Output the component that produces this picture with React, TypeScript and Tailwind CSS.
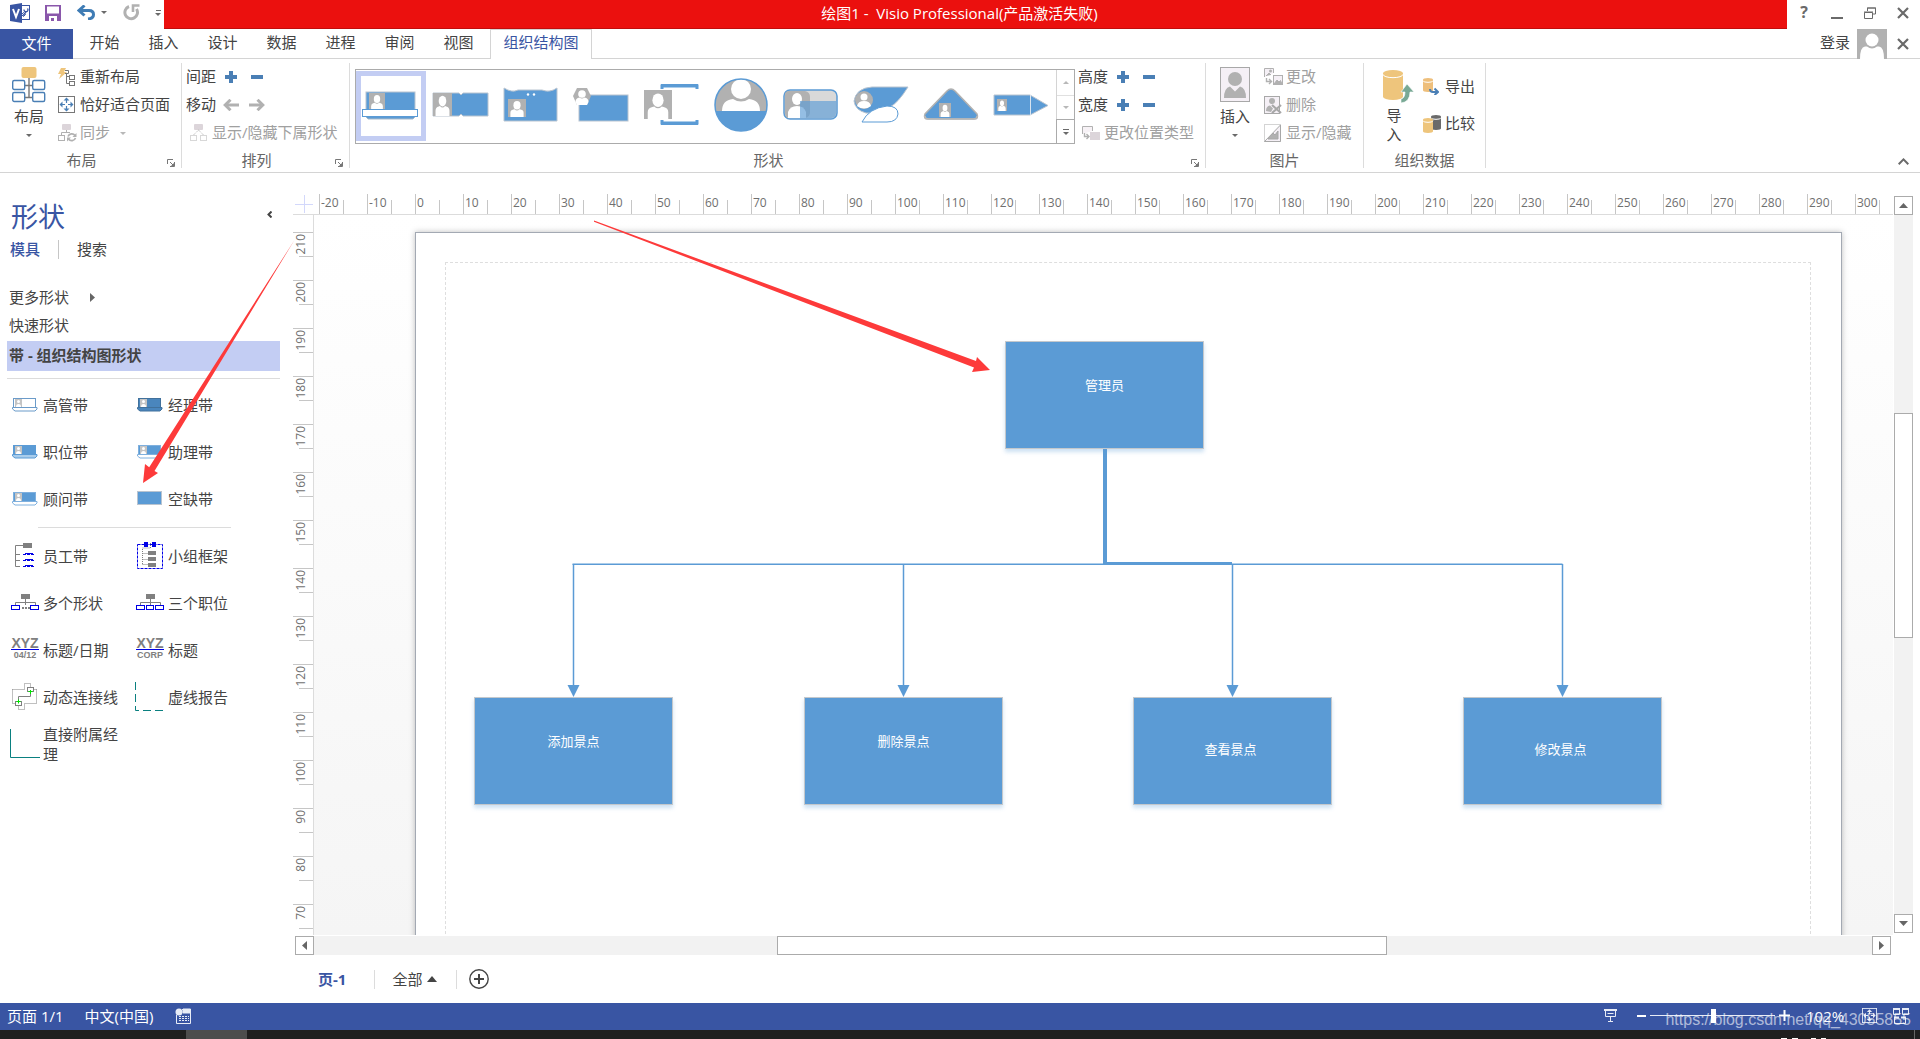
import React from "react";

const FONT = "font-['Open_Sans','Noto_Sans_CJK_SC',sans-serif]";

type Kids = { children?: React.ReactNode };

/* ---------- small glyphs ---------- */

function Plus() {
  return (
    <svg width="12" height="12" viewBox="0 0 12 12" fill="#4a7fb5">
      <path d="M4 0h4v4h4v4H8v4H4V8H0V4h4z" />
    </svg>
  );
}

function Minus() {
  return (
    <svg width="12" height="12" viewBox="0 0 12 12" fill="#4a7fb5">
      <path d="M0 4h12v4H0z" />
    </svg>
  );
}

function ArrowGlyph({ flip }: { flip?: boolean }) {
  return (
    <svg width="16" height="12" viewBox="0 0 16 12" fill="none" stroke="#b1b1b1" strokeWidth="3" className={flip ? "rotate-180" : ""}>
      <path d="M16 6H2" />
      <path d="M7.500 0.800L2.200 6l5.300 5.200" />
    </svg>
  );
}

function Caret({ color = "#6a6a6a" }: { color?: string }) {
  return (
    <svg width="6" height="3" viewBox="0 0 6 3" fill={color}>
      <path d="M0 0h6L3 3z" />
    </svg>
  );
}

function CloseGlyph() {
  return (
    <svg width="12" height="12" viewBox="0 0 12 12" stroke="#6a6a6a" strokeWidth="2.200">
      <path d="M1 1l10 10M11 1L1 11" />
    </svg>
  );
}

function Launcher() {
  return (
    <svg width="8" height="8" viewBox="0 0 8 8" fill="none" stroke="#777" strokeWidth="1">
      <path d="M0.500 5V0.500H6M3 3l3 3M7.500 3v4.500H3" />
      <path d="M7 4v3H4z" fill="#777" stroke="none" />
    </svg>
  );
}

function Person({ x, y, w, h, bg = "#b1b1b1" }: { x: number; y: number; w: number; h: number; bg?: string }) {
  return (
    <svg x={x} y={y} width={w} height={h} viewBox="0 0 30 30" preserveAspectRatio="none">
      <rect width="30" height="30" fill={bg} />
      <ellipse cx="15" cy="10.500" rx="6" ry="7" fill="#fff" />
      <path d="M4 30v-7q0-4.500 5-5.500l2-.5q4 4 8 0l2 .5q5 1 5 5.500v7z" fill="#fff" />
    </svg>
  );
}

/* ---------- quick access bar ---------- */

function VisioLogo() {
  return (
    <svg width="20" height="20" viewBox="0 0 20 20">
      <rect x="9.500" y="2.500" width="10" height="14" fill="#fff" stroke="#3955a3" />
      <path d="M13 12.500l3-3.500v-1M14 6.500a2 2 0 1 0 3.500-1" fill="none" stroke="#3955a3" strokeWidth="1.300" />
      <path d="M11.500 11.500l2-2 2 2-2 2z" fill="none" stroke="#3955a3" />
      <path d="M0 2l12-2v20L0 18z" fill="#3955a3" />
      <path d="M3 6l3 8 3-8" fill="none" stroke="#fff" strokeWidth="2" />
    </svg>
  );
}

function SaveIcon() {
  return (
    <svg width="16" height="16" viewBox="0 0 16 16">
      <path d="M0 0h16v16H0z" fill="#8a57ab" />
      <path d="M2 1.500h12v7H2zM4 11h8v5H9v-3H6v3H4z" fill="#fff" />
    </svg>
  );
}

function UndoIcon() {
  return (
    <svg width="18" height="15" viewBox="0 0 18 15" fill="none" stroke="#3f7cb5" strokeWidth="3">
      <path d="M7.500 0.500L2 5.500l5.500 5" />
      <path d="M2.500 5.500h9.500q4.500 0 4.500 4t-5.500 4.500" />
    </svg>
  );
}

function RedoIcon() {
  return (
    <svg width="17" height="17" viewBox="0 0 17 17" fill="none" stroke="#b1b1b1" strokeWidth="3">
      <path d="M13.500 5A6.300 6.300 0 1 1 6 2.500" />
      <path d="M10 8V1.500H16.500" strokeWidth="2.600" />
    </svg>
  );
}

function TitleBar() {
  return (
    <header className="flex h-[29px] shrink-0">
      <div className="flex w-[164px] shrink-0 items-center pb-1 pl-[10px]">
        <button aria-label="Visio"><VisioLogo /></button>
        <button aria-label="保存" className="ml-[15px]"><SaveIcon /></button>
        <button aria-label="撤消" className="ml-4 flex items-center gap-[6px]"><UndoIcon /><Caret /></button>
        <button aria-label="恢复" className="ml-4"><RedoIcon /></button>
        <button aria-label="自定义快速访问工具栏" className="ml-[15px] flex flex-col items-center gap-[2px]">
          <span className="h-px w-[5px] bg-[#6a6a6a]" />
          <Caret />
        </button>
      </div>
      <div className="flex flex-1 items-center justify-center border-b border-[#c00d0d] bg-[#eb100e] pb-[3px] pr-8">
        <h1 className="whitespace-pre text-[15px] leading-5 text-white">绘图1 -  Visio Professional(产品激活失败)</h1>
      </div>
      <div className="flex w-[133px] shrink-0 items-center justify-between pb-[3px] pl-[11px] pr-[11px]">
        <button aria-label="帮助" className="w-3 pb-[2px] text-[16px] font-bold leading-5 text-[#6a6a6a]">?</button>
        <button aria-label="最小化" className="flex h-3 items-end"><span className="h-[2px] w-3 bg-[#6a6a6a]" /></button>
        <button aria-label="还原">
          <svg width="12" height="12" viewBox="0 0 12 12" fill="none" stroke="#6a6a6a">
            <path d="M3.500 4V1h8v6H9M3 1h9M0.500 5.500h8v6h-8zM0 5h9" />
          </svg>
        </button>
        <button aria-label="关闭"><CloseGlyph /></button>
      </div>
    </header>
  );
}

const TABS = ["开始", "插入", "设计", "数据", "进程", "审阅", "视图"];

function TabRow() {
  return (
    <nav className="flex h-[30px] shrink-0 text-[15px] leading-[22px] text-[#444]">
      <button className="w-[73px] bg-[#3955a3] pb-[2px] text-white">文件</button>
      <div className="flex flex-1 border-b border-[#d4d4d4] pl-[2px]">
        {TABS.map((t) => (
          <button key={t} className="w-[59px] pb-[3px]">{t}</button>
        ))}
        <button className="-mb-px ml-[2px] w-[102px] border-x border-t border-[#d4d4d4] bg-white pb-[5px] text-[#3955a3]">组织结构图</button>
      </div>
      <div className="flex items-center border-b border-[#d4d4d4] pr-[11px]">
        <button className="pb-[3px] pr-[7px]">登录</button>
        <svg width="30" height="30" viewBox="0 0 30 30" className="-mb-px mr-[10px]">
          <rect width="30" height="30" fill="#b1b1b1" />
          <circle cx="15" cy="11" r="6.500" fill="#fff" />
          <path d="M3 30q0-12 5-12.500h2q5 4 10 0h2q5 .5 5 12.500z" fill="#fff" />
        </svg>
        <button aria-label="关闭窗口"><CloseGlyph /></button>
      </div>
    </nav>
  );
}

/* ---------- ribbon icons ---------- */

function LayoutIcon() {
  return (
    <svg width="34" height="36" viewBox="0 0 34 36" fill="none" stroke="#4a7fb5" strokeWidth="1.400">
      <path d="M17 11v20M12.500 18.500h9M12.500 30.500h9" stroke="#777" />
      <rect x="9.500" y="0" width="15" height="11" rx="2" fill="#eec57c" stroke="none" />
      {[13.5, 25.5].map((y) => (
        <g key={y}>
          <rect x="0.700" y={y} width="12" height="9" rx="1.500" fill="#fff" />
          <rect x="20.700" y={y} width="12" height="9" rx="1.500" fill="#fff" />
        </g>
      ))}
    </svg>
  );
}

function RelayoutIcon() {
  return (
    <svg width="18" height="18" viewBox="0 0 18 18" fill="none" stroke="#777">
      <path d="M3 0h5L6 4h3L1 11l2-5H0z" fill="#eec57c" stroke="none" />
      <path d="M7 2.500h3.500v3H7M8.500 6v9.500H12M8.500 8.500H12" />
      <rect x="11.500" y="7.500" width="5" height="4" />
      <rect x="11.500" y="13.500" width="5" height="4" />
    </svg>
  );
}

function FitIcon({ color = "#4a7fb5", frame = "#777", size = 17 }: { color?: string; frame?: string; size?: number }) {
  return (
    <svg width={size} height={size} viewBox="0 0 17 17">
      <rect x="0.500" y="0.500" width="16" height="16" fill="none" stroke={frame} />
      <path d="M8.500 1.500l3 3h-6zM8.500 15.500l3-3h-6zM1.500 8.500l3-3v6zM15.500 8.500l-3-3v6z" fill={color} />
      <path d="M8.500 4v3M8.500 10v3M4 8.500h3M10 8.500h3" stroke={color} strokeWidth="1.200" />
    </svg>
  );
}

function SyncIcon() {
  return (
    <svg width="19" height="18" viewBox="0 0 19 18" fill="none" stroke="#b1b1b1">
      <path d="M8.500 6v3M3.500 11.500V8.500H12" />
      <rect x="4" y="0" width="9" height="6" rx="1" fill="#dcd5da" stroke="none" />
      <rect x="0.500" y="11.500" width="6" height="5" />
      <path d="M10 12.500a4 4 0 0 1 7-1M17.500 14a4 4 0 0 1-7 1" strokeWidth="1.700" />
      <path d="M18.500 9v4h-4zM9 17.500v-4h4z" fill="#b1b1b1" stroke="none" />
    </svg>
  );
}

function SubordinateIcon() {
  return (
    <svg width="18" height="17" viewBox="0 0 18 17" fill="none" stroke="#b1b1b1">
      <rect x="4" y="0" width="9" height="6" rx="1" fill="#dcd5da" stroke="none" />
      <path d="M8.500 6L3.500 11M8.500 6l5 5" strokeDasharray="1 1" />
      <rect x="0.500" y="11.500" width="6" height="5" strokeDasharray="1 1" />
      <rect x="10.500" y="11.500" width="6" height="5" strokeDasharray="1 1" />
    </svg>
  );
}

function PositionTypeIcon() {
  return (
    <svg width="18" height="14" viewBox="0 0 18 14" fill="none" stroke="#b1b1b1">
      <path d="M0.500 8V0.500h10V5" fill="#f7f2f6" />
      <rect x="8" y="6" width="10" height="8" fill="#dcd5da" stroke="none" />
      <path d="M2.500 7v3.500H7M4.500 8L7 10.500 4.500 13" strokeWidth="1.400" />
    </svg>
  );
}

function PortraitIcon() {
  return (
    <svg width="30" height="35" viewBox="0 0 30 35">
      <rect x="0.500" y="0.500" width="29" height="34" fill="#f5f0f6" stroke="#a8a8a8" />
      <circle cx="15" cy="12" r="7" fill="#b1b1b1" />
      <path d="M4 31q0-10 6-11.500l5 5 5-5q6 1.500 6 11.500z" fill="#b1b1b1" />
    </svg>
  );
}

function ChangePicIcon() {
  return (
    <svg width="19" height="18" viewBox="0 0 19 18" fill="none" stroke="#b1b1b1">
      <path d="M0.500 9V0.500h9V5" fill="#f5f0f6" />
      <circle cx="6.500" cy="3" r="1.500" fill="#b1b1b1" stroke="none" />
      <path d="M2 8l3-3 2 2" fill="#b1b1b1" />
      <rect x="9.500" y="7.500" width="9" height="9" fill="#f5f0f6" />
      <path d="M10 16l3-4 2 2 1.500-1.500L18 16z" fill="#b1b1b1" />
      <path d="M2.500 10v3.500H7M5 11l2.500 2.500L5 16" strokeWidth="1.400" />
    </svg>
  );
}

function DeletePicIcon() {
  return (
    <svg width="18" height="18" viewBox="0 0 18 18" fill="none" stroke="#a8a8a8">
      <rect x="0.500" y="0.500" width="15" height="17" fill="#f5f0f6" />
      <circle cx="8" cy="5" r="3" fill="#b1b1b1" stroke="none" />
      <path d="M2 15q0-5 4-5.500l3 3-2 3.500z" fill="#b1b1b1" stroke="none" />
      <path d="M8 9l9 8M17 9l-9 8" strokeWidth="2.200" />
    </svg>
  );
}

function ShowPicIcon() {
  return (
    <svg width="17" height="18" viewBox="0 0 17 18" fill="none" stroke="#a8a8a8">
      <rect x="0.500" y="0.500" width="16" height="17" strokeDasharray="1 1" />
      <path d="M16.500 1v16.500H0.500z" fill="#f5f0f6" />
      <path d="M4 15l5-6 2 2 3-4v8z" fill="#b1b1b1" />
    </svg>
  );
}

function Cylinder({ x, y, w, h, fill }: { x: number; y: number; w: number; h: number; fill: string }) {
  const r = w / 2;
  const e = w / 6;
  return (
    <g>
      <path d={`M${x} ${y + e}v${h - 2 * e}a${r} ${e} 0 0 0 ${w} 0v${-(h - 2 * e)}a${r} ${e} 0 0 0 ${-w} 0z`} fill={fill} />
      <path d={`M${x} ${y + e + 1}a${r} ${e} 0 0 0 ${w} 0`} fill="none" stroke="#fff" strokeWidth="1" />
    </g>
  );
}

function ImportIcon() {
  return (
    <svg width="31" height="33" viewBox="0 0 31 33">
      <Cylinder x={0} y={0} w={20} h={30} fill="#eec57c" />
      <path d="M24 14l7 8h-4q0 10-9 11v-4q4-1 4-7h-4z" fill="#78a995" stroke="#fff" strokeWidth="0.600" />
    </svg>
  );
}

function ExportIcon() {
  return (
    <svg width="16" height="17" viewBox="0 0 16 17">
      <Cylinder x={0} y={0} w={10} h={14} fill="#eebf7c" />
      <path d="M7 11q0 3 3 3h4M11.500 10.500l3.500 3.500-3.500 3" fill="none" stroke="#4a7fb5" strokeWidth="2" />
    </svg>
  );
}

function CompareIcon() {
  return (
    <svg width="19" height="18" viewBox="0 0 19 18">
      <Cylinder x={8} y={0} w={10} h={15} fill="#6a6a6a" />
      <Cylinder x={0} y={3} w={10} h={15} fill="#eec57c" />
    </svg>
  );
}

/* ---------- ribbon ---------- */

function Group({ label, width, launcher, children }: Kids & { label: string; width: string; launcher?: boolean }) {
  return (
    <section className={`${width} relative flex shrink-0 flex-col border-r border-[#dcdcdc]`}>
      <div className="flex h-[89px]">{children}</div>
      <h2 className="text-center text-[15px] leading-4 text-[#666]">
        <span className={launcher ? "pr-[18px]" : ""}>{label}</span>
      </h2>
      {launcher && (
        <button aria-label={`${label}设置`} className="absolute bottom-[1px] right-[6px]"><Launcher /></button>
      )}
    </section>
  );
}

function Cmd({ icon, label, disabled, caret }: { icon: React.ReactNode; label: string; disabled?: boolean; caret?: boolean }) {
  return (
    <button className={`flex h-7 items-center whitespace-nowrap text-[15px] leading-5 ${disabled ? "text-[#a0a0a0]" : "text-[#444]"}`}>
      <span className="flex w-[22px] pb-px">{icon}</span>
      <span className="pb-[2px]">{label}</span>
      {caret && <span className="ml-[10px]"><Caret color="#b8b8b8" /></span>}
    </button>
  );
}

function Stepper({ label, less, more }: { label: string; less: React.ReactNode; more: React.ReactNode }) {
  return (
    <div className="flex h-7 items-center text-[15px] leading-5 text-[#444]">
      <span className="pb-[2px]">{label}</span>
      <button aria-label={`${label} 1`} className="ml-[7px] flex w-4 justify-center pb-px">{less}</button>
      <button aria-label={`${label} 2`} className="ml-[10px] flex w-4 justify-center pb-px">{more}</button>
    </div>
  );
}

const BLUE = "#5b9bd5";

const GALLERY: { name: string; art: React.ReactNode }[] = [
  {
    name: "带",
    art: (
      <>
        <rect x="6" y="21" width="49" height="24" fill={BLUE} stroke="#b9c4d0" />
        <Person x={9} y={22} w={16} h={17} />
        <path d="M5 45h51l-3 3H8z" fill={BLUE} stroke="#a9b9c9" />
        <rect x="2.500" y="38.500" width="55" height="7" fill="#fff" stroke={BLUE} />
      </>
    ),
  },
  {
    name: "凹槽",
    art: (
      <>
        <path d="M3 22h26l2 2 2-2h25v23H33l-2-2-2 2H3z" fill={BLUE} stroke="#b9c4d0" />
        <Person x={3} y={22} w={19} h={23} />
      </>
    ),
  },
  {
    name: "别针",
    art: (
      <>
        <path d="M4 17q8 5 14 2h24q8 3 15-2v33H4z" fill={BLUE} stroke="#b9c4d0" />
        <circle cx="28" cy="23.500" r="1.200" fill="#fff" />
        <circle cx="34" cy="23.500" r="1.200" fill="#fff" />
        <Person x={8} y={28} w={18} h={18} />
      </>
    ),
  },
  {
    name: "石头",
    art: (
      <>
        <rect x="9" y="24" width="49" height="26" fill={BLUE} stroke="#b9c4d0" />
        <path d="M7 17h10l4 8-4 9H7l-4-9z" fill="#b1b1b1" />
        <circle cx="12" cy="23" r="3.800" fill="#fff" />
        <path d="M5.500 31q0-4 4-4.500 2.500 2 5 0 4 .5 4 4.500L17 34H7z" fill="#fff" />
      </>
    ),
  },
  {
    name: "边界",
    art: (
      <>
        <path d="M22 18V15h35v3M22 49v3h35v-3" fill="none" stroke={BLUE} strokeWidth="3" />
        <path d="M21 14h37M21 53h37" stroke={BLUE} strokeWidth="2" />
        <Person x={4} y={19} w={28} h={29} />
      </>
    ),
  },
  {
    name: "泡沫",
    art: (
      <>
        <clipPath id="bubble"><circle cx="31" cy="34" r="26" /></clipPath>
        <circle cx="31" cy="34" r="26" fill={BLUE} />
        <g clipPath="url(#bubble)">
          <rect x="4" y="7" width="54" height="33" fill="#b1b1b1" />
          <circle cx="31" cy="18" r="10" fill="#fff" />
          <path d="M12 40q0-11 11-12 8 5 16 0 11 1 11 12z" fill="#fff" />
        </g>
        <circle cx="31" cy="34" r="26" fill="none" stroke={BLUE} strokeWidth="1.500" />
      </>
    ),
  },
  {
    name: "平底凹圆",
    art: (
      <>
        <rect x="4" y="19" width="53" height="29" rx="6" fill="#d9d9d9" stroke={BLUE} strokeWidth="1.500" />
        <path d="M9 20h16q5 1 5 6v15q0 5-5 6H9q-4 0-4-5V24q0-4 4-4z" fill="#b1b1b1" />
        <ellipse cx="17" cy="28" rx="5" ry="6" fill="#fff" />
        <path d="M8 47v-6q2-6 9-6t9 6v6z" fill="#fff" />
        <path d="M20 30h36v12q0 5-5 5H20z" fill="#5b9bd5" fillOpacity="0.650" />
      </>
    ),
  },
  {
    name: "花瓣",
    art: (
      <>
        <path d="M58 16q-10 16-18 20-10 7-24 6-11-3-12-12 2-13 18-14z" fill={BLUE} stroke="#b9c4d0" />
        <circle cx="14" cy="29" r="9" fill="#b1b1b1" />
        <circle cx="14" cy="26" r="3.500" fill="#fff" />
        <path d="M7 35q1-5 7-5t7 5q-7 5-14 0z" fill="#fff" />
        <path d="M12 51q7-14 25-16 11 0 11 8-1 8-11 8z" fill="#fff" stroke={BLUE} />
      </>
    ),
  },
  {
    name: "三角形",
    art: (
      <>
        <path d="M31 18q2 0 4 2l22 23q2 5-3 5H8q-5 0-3-5l22-23q2-2 4-2z" fill={BLUE} stroke="#b1b1b1" strokeWidth="1.500" />
        <path d="M5 45q0 3 4 3h44q4 0 4-3" fill="none" stroke="#b9b9b9" strokeWidth="1.500" />
        <Person x={19} y={32} w={12} h={14} />
      </>
    ),
  },
  {
    name: "箭头",
    art: (
      <>
        <path d="M4 24h36l18 10.500L40 44H4z" fill={BLUE} stroke="#b9c4d0" />
        <path d="M40.500 24v20" stroke="#d8e4ef" />
        <Person x={7} y={28} w={10} h={12} />
      </>
    ),
  },
];

function Gallery() {
  return (
    <div className="ml-[5px] mt-[6px] flex h-[75px] w-[720px] border border-[#ababab]">
      <div className="flex flex-1 pt-px">
        {GALLERY.map((g, i) => (
          <button
            key={g.name}
            aria-label={g.name}
            className={`flex h-[70px] w-[70px] items-center justify-center ${i === 0 ? "border-[5px] border-[#c3cdf3]" : ""}`}
          >
            <svg width="60" height="70" viewBox="1 0 60 70" className="shrink-0">{g.art}</svg>
          </button>
        ))}
      </div>
      <div className="flex w-[18px] flex-col border-l border-[#d4d4d4]">
        <button aria-label="上一行" className="flex h-[26px] items-center justify-center border-b border-[#e0e0e0]">
          <span className="rotate-180"><Caret color="#b8b8b8" /></span>
        </button>
        <button aria-label="下一行" className="flex h-[23px] items-center justify-center"><Caret color="#b8b8b8" /></button>
        <button aria-label="更多" className="-ml-px flex flex-1 flex-col items-center justify-center gap-[2px] border-l border-t border-[#ababab]">
          <span className="h-px w-[6px] bg-[#6a6a6a]" />
          <Caret />
        </button>
      </div>
    </div>
  );
}

function Ribbon() {
  return (
    <div className="relative flex h-[114px] shrink-0 border-b border-[#d4d4d4] py-1">
      <Group label="布局" width="w-[182px]" launcher>
        <button className="ml-2 mr-2 flex w-[42px] flex-col items-center pt-1 text-[15px] leading-5 text-[#444]">
          <LayoutIcon />
          <span className="mb-2 mt-[3px]">布局</span>
          <Caret />
        </button>
        <div className="flex flex-col">
          <Cmd icon={<RelayoutIcon />} label="重新布局" />
          <Cmd icon={<FitIcon />} label="恰好适合页面" />
          <Cmd icon={<SyncIcon />} label="同步" disabled caret />
        </div>
      </Group>
      <Group label="排列" width="w-[168px]" launcher>
        <div className="ml-1 flex flex-col">
          <Stepper label="间距" less={<Plus />} more={<Minus />} />
          <Stepper label="移动" less={<ArrowGlyph />} more={<ArrowGlyph flip />} />
          <div className="ml-1"><Cmd icon={<SubordinateIcon />} label="显示/隐藏下属形状" disabled /></div>
        </div>
      </Group>
      <Group label="形状" width="w-[856px]" launcher>
        <Gallery />
        <div className="ml-[3px] flex flex-col">
          <Stepper label="高度" less={<Plus />} more={<Minus />} />
          <Stepper label="宽度" less={<Plus />} more={<Minus />} />
          <div className="ml-1"><Cmd icon={<PositionTypeIcon />} label="更改位置类型" disabled /></div>
        </div>
      </Group>
      <Group label="图片" width="w-[158px]">
        <button className="ml-2 mr-2 flex w-[42px] flex-col items-center pt-1 text-[15px] leading-5 text-[#444]">
          <PortraitIcon />
          <span className="mb-2 mt-[4px]">插入</span>
          <Caret />
        </button>
        <div className="flex flex-col">
          <Cmd icon={<ChangePicIcon />} label="更改" disabled />
          <Cmd icon={<DeletePicIcon />} label="删除" disabled />
          <Cmd icon={<ShowPicIcon />} label="显示/隐藏" disabled />
        </div>
      </Group>
      <Group label="组织数据" width="w-[122px]">
        <button className="ml-4 flex w-[36px] flex-col items-center pt-[7px] text-[15px] leading-[19px] text-[#444]">
          <ImportIcon />
          <span className="mr-[8px] mt-[3px] w-[15px]">导入</span>
        </button>
        <div className="ml-[7px] flex flex-col gap-[9px] pt-[10px]">
          <Cmd icon={<ExportIcon />} label="导出" />
          <Cmd icon={<CompareIcon />} label="比较" />
        </div>
      </Group>
      <button aria-label="折叠功能区" className="absolute bottom-[7px] right-[11px]">
        <svg width="11" height="7" viewBox="0 0 11 7" fill="none" stroke="#6a6a6a" strokeWidth="2">
          <path d="M0.700 6.200L5.500 1.400l4.800 4.800" />
        </svg>
      </button>
    </div>
  );
}

/* ---------- shapes panel ---------- */

function BeltIcon({ top, base, edge }: { top: string; base: string; edge: string }) {
  return (
    <svg width="26" height="15" viewBox="0 0 26 15">
      <rect x="1.500" y="1.500" width="22" height="10" fill={top} stroke={edge} />
      <rect x="3" y="2" width="7" height="8" fill="#c4c4c4" />
      <circle cx="6.500" cy="4.500" r="1.500" fill="#fff" />
      <path d="M4 10q0-3 2.500-3T9 10z" fill="#fff" />
      <path d="M0.500 10.500h24.500v1.500l-2 2h-20L0.500 12z" fill={base} stroke={edge} />
    </svg>
  );
}

function Tree({ mid }: { mid: boolean }) {
  return (
    <svg width="28" height="17" viewBox="0 0 28 17" fill="none">
      <rect x="10" y="0" width="9" height="5" fill="#808080" />
      <path d="M14.500 5v6M4.500 11V8.500h20V11" stroke="#808080" />
      <rect x="0.500" y="11.500" width="8" height="4" stroke="#0000e6" />
      <rect x="19.500" y="11.500" width="8" height="4" stroke="#0000e6" />
      {mid ? (
        <rect x="10.500" y="11.500" width="7" height="4" stroke="#0000e6" />
      ) : (
        <path d="M11 14h8" stroke="#808080" strokeWidth="2" strokeDasharray="2 1" />
      )}
    </svg>
  );
}

function StaffIcon() {
  return (
    <svg width="20" height="25" viewBox="0 0 20 25" fill="none">
      <rect x="8" y="0" width="9" height="5" fill="#808080" />
      <path d="M8 2.500H0.500v21H5M0.500 11.500H5M0.500 17.500H5" stroke="#808080" />
      <path d="M8 11.500h12M8 17.500h12M8 23.500h12" stroke="#0000e6" strokeDasharray="3 1" />
      <path d="M10 10.500h8M10 16.500h8M10 22.500h8" stroke="#0000e6" />
    </svg>
  );
}

function FrameIcon() {
  return (
    <svg width="26" height="29" viewBox="0 0 26 29" fill="none">
      <rect x="0.500" y="3.500" width="25" height="24" stroke="#0000e6" strokeDasharray="3 1" />
      <path d="M7 3.500h4M15 3.500h4" stroke="#0000e6" strokeWidth="5" />
      <path d="M13.500 2v5H5.500v17M5.500 12.500h5M5.500 18.500h5M5.500 23.500h5" stroke="#808080" strokeDasharray="1 1" />
      <path d="M11 12h8M11 18h8M11 24h8" stroke="#808080" strokeWidth="4" />
    </svg>
  );
}

function TitleIcon({ sub }: { sub: string }) {
  return (
    <span className="flex w-7 flex-col items-center font-['Liberation_Sans',sans-serif] font-bold text-[#808080]">
      <span className="text-[14px] leading-[11px]">XYZ</span>
      <span className="h-px w-7 bg-[#0000e6]" />
      <span className="text-[9px] leading-[11px]">{sub}</span>
    </span>
  );
}

function ConnectorIcon() {
  return (
    <svg width="26" height="27" viewBox="0 0 26 27" fill="none">
      <path d="M0.500 6.500h12v-6h6v4M24.500 6.500v14h-12v6h-6v-4M0.500 6.500v14M24.500 6.500h-3M0.500 20.500h3" stroke="#808080" strokeDasharray="1 1" />
      <path d="M18.500 8v5.500H6.500V18" stroke="#808080" />
      <rect x="15.500" y="4.500" width="6" height="4" stroke="#808080" />
      <rect x="3.500" y="18.500" width="6" height="4" stroke="#808080" />
      <path d="M16.500 8.500h4M18.500 7v4M4.500 18.500h4M6.500 16.500v4" stroke="#00e600" />
    </svg>
  );
}

function CornerIcon({ dashed }: { dashed?: boolean }) {
  return (
    <svg width="30" height="29" viewBox="0 0 30 29" fill="none" stroke="#0a8080">
      <path d="M0.500 0v28.500H30" strokeDasharray={dashed ? "8 4" : undefined} />
    </svg>
  );
}

const BELTS: [string, React.ReactNode][] = [
  ["高管带", <BeltIcon top="#fff" base="#fff" edge="#6b9bc9" />],
  ["经理带", <BeltIcon top="#4a86bd" base="#4a86bd" edge="#41719c" />],
  ["职位带", <BeltIcon top={BLUE} base="#a9cdec" edge="#5b9bd5" />],
  ["助理带", <BeltIcon top={BLUE} base="#fff" edge="#7fb0de" />],
  ["顾问带", <BeltIcon top={BLUE} base="#fff" edge="#7fb0de" />],
  [
    "空缺带",
    <svg width="26" height="15" viewBox="0 0 26 15">
      <rect x="0.500" y="0.500" width="24" height="13" fill={BLUE} stroke="#b9c4d0" />
    </svg>,
  ],
];

const STRUCTURES: [string, React.ReactNode][] = [
  ["员工带", <StaffIcon />],
  ["小组框架", <FrameIcon />],
  ["多个形状", <Tree mid={false} />],
  ["三个职位", <Tree mid />],
  ["标题/日期", <TitleIcon sub="04/12" />],
  ["标题", <TitleIcon sub="CORP" />],
  ["动态连接线", <ConnectorIcon />],
  ["虚线报告", <CornerIcon dashed />],
  ["直接附属经理", <CornerIcon />],
];

function ShapeGrid({ items }: { items: [string, React.ReactNode][] }) {
  return (
    <div className="grid grid-cols-[125px_125px] pl-[9px]">
      {items.map(([name, icon]) => (
        <button key={name} className="flex h-[47px] items-center text-left text-[15px] leading-5 text-[#444]">
          <span className="flex w-[34px] shrink-0 items-center justify-center pr-[2px]">{icon}</span>
          <span className="w-[80px]">{name}</span>
        </button>
      ))}
    </div>
  );
}

function ShapesPanel() {
  return (
    <aside className="w-[293px] shrink-0 text-[15px] leading-5 text-[#444]">
      <div className="flex items-center justify-between pl-[11px] pr-[21px] pt-6">
        <h2 className="text-[27px] leading-10 text-[#3955a3]">形状</h2>
        <button aria-label="折叠形状窗口" className="pb-[6px]">
          <svg width="5" height="7" viewBox="0 0 5 7" fill="none" stroke="#444" strokeWidth="2"><path d="M4.500 0.500l-3 3 3 3" /></svg>
        </button>
      </div>
      <div className="mt-[2px] flex items-center pl-[10px]">
        <button className="font-medium text-[#3955a3]">模具</button>
        <span className="mx-[18px] h-[19px] w-px bg-[#c6c6c6]" />
        <button>搜索</button>
      </div>
      <button className="mt-[28px] flex h-[20px] items-center gap-[21px] pl-[9px]">
        更多形状
        <svg width="5" height="9" viewBox="0 0 5 9" fill="#666"><path d="M0 0l5 4.500L0 9z" /></svg>
      </button>
      <button className="mt-2 block pl-[9px]">快速形状</button>
      <button className="ml-[7px] mt-[6px] block h-[30px] w-[273px] bg-[#c3cdf3] pb-[2px] pl-[2px] text-left font-bold">带 - 组织结构图形状</button>
      <hr className="mb-[2px] ml-[7px] mr-[13px] mt-[7px] border-[#dcdcdc]" />
      <ShapeGrid items={BELTS} />
      <hr className="mb-1 ml-[38px] mr-[62px] mt-[5px] border-[#dcdcdc]" />
      <ShapeGrid items={STRUCTURES} />
    </aside>
  );
}

/* ---------- drawing area ---------- */

const H_MARKS = Array.from({ length: 33 }, (_, i) => i * 10 - 20);
const V_MARKS = Array.from({ length: 15 }, (_, i) => 210 - i * 10);

function HorizontalRuler() {
  return (
    <div className="flex h-[21px] flex-1 overflow-hidden border-b border-[#dcdcdc] pl-[5px] font-['Open_Sans',sans-serif] text-[12px] leading-[17px] text-[#6f6f6f]">
      {H_MARKS.map((m) => (
        <div key={m} className="flex w-12 shrink-0 items-end border-l border-[#c6c6c6]">
          <span className="h-full w-[23px] pl-px">{m}</span>
          <span className="h-[14px] w-px bg-[#c6c6c6]" />
        </div>
      ))}
    </div>
  );
}

function VerticalRuler() {
  return (
    <div className="flex w-[21px] shrink-0 flex-col overflow-hidden border-r border-[#dcdcdc] pt-[17px] font-['Open_Sans',sans-serif] text-[12px] leading-4 text-[#6f6f6f]">
      {V_MARKS.map((m) => (
        <div key={m} className="flex h-12 shrink-0 flex-col items-end border-t border-[#c6c6c6]">
          <span className="flex h-[23px] w-full items-start justify-start">
            <span className="rotate-180 pb-px [writing-mode:vertical-rl]">{m}</span>
          </span>
          <span className="h-px w-[14px] bg-[#c6c6c6]" />
        </div>
      ))}
    </div>
  );
}

function DiagramNode({ text, place }: { text: string; place: string }) {
  return (
    <div className={`${place} absolute flex h-[108px] w-[199px] items-center justify-center border border-[#c4c8cc] bg-[#5b9bd5] text-[13px] leading-4 text-white shadow-[0_3px_4px_rgba(91,155,213,0.3)]`}>
      {text}
    </div>
  );
}

function Diagram() {
  return (
    <div className="relative flex-1 overflow-hidden bg-linear-to-b from-white to-[#f5f5f5]">
      <div className="absolute -bottom-5 left-[101px] top-[17px] w-[1427px] border border-[#a3a9b3] bg-white shadow-[0_0_6px_rgba(0,0,0,0.25)]">
        <div className="absolute inset-0 left-[29px] right-[30px] top-[29px] border border-dashed border-[#dedede]" />
      </div>
      <svg width="1500" height="500" viewBox="0 0 1500 500" className="absolute left-0 top-0" fill="none" stroke={BLUE} strokeWidth="2">
        <path d="M791 233v117" strokeWidth="4" />
        <path d="M258.500 349.250H1248.500" strokeWidth="1.500" />
        <path d="M791 348.500H918" strokeWidth="3" />
        {[259, 589, 918, 1248].map((x) => (
          <g key={x}>
            <path d={`M${x + 0.5} 349v125`} strokeWidth="1.500" />
            <path d={`M${x - 5.500} 470h12l-6 12z`} fill={BLUE} stroke="none" />
          </g>
        ))}
      </svg>
      <DiagramNode text="管理员" place="left-[691px] top-[126px] pb-5" />
      <DiagramNode text="添加景点" place="left-[160px] top-[482px] pb-5" />
      <DiagramNode text="删除景点" place="left-[490px] top-[482px] pb-5" />
      <DiagramNode text="查看景点" place="left-[819px] top-[482px] pb-1 pr-1" />
      <DiagramNode text="修改景点" place="left-[1149px] top-[482px] pb-1 pr-1" />
    </div>
  );
}

function ScrollButton({ dir, label }: { dir: string; label: string }) {
  return (
    <button aria-label={label} className="flex h-[19px] w-[19px] shrink-0 items-center justify-center border border-[#ababab] bg-white">
      <svg width="9" height="5" viewBox="0 0 9 5" fill="#666" className={`${dir} shrink-0`}><path d="M0 5h9L4.500 0z" /></svg>
    </button>
  );
}

function PageTabs() {
  return (
    <div className="flex h-12 shrink-0 items-center pl-[25px] text-[15px] leading-5 text-[#444]">
      <button className="font-bold text-[#3955a3]">页-1</button>
      <span className="ml-7 mr-[17px] h-[19px] w-px bg-[#dcdcdc]" />
      <button className="flex items-center gap-[5px]">
        全部
        <svg width="10" height="6" viewBox="0 0 10 6" fill="#444"><path d="M0 6h10L5 0z" /></svg>
      </button>
      <span className="ml-[19px] mr-3 h-[19px] w-px bg-[#dcdcdc]" />
      <button aria-label="插入页">
        <svg width="20" height="20" viewBox="0 0 20 20" fill="none" stroke="#444">
          <circle cx="10" cy="10" r="9.200" strokeWidth="1.400" />
          <path d="M10 5v10M5 10h10" strokeWidth="2" />
        </svg>
      </button>
    </div>
  );
}

function RedArrows() {
  return (
    <svg width="1000" height="500" viewBox="0 0 1000 500" fill="#fd3a3a" className="pointer-events-none absolute left-0 top-0">
      <path d="M294.500 67L149.200 294.300l-4.200-3.300-2 19 15-10-3.500-2z" />
      <path d="M594 47.500L976 188l1-4 13 13-18 2 2-4.500L594 48.800z" />
    </svg>
  );
}

/* ---------- bottom bars ---------- */

function StatusBar() {
  return (
    <footer className="relative flex h-[27px] shrink-0 items-center bg-[#3955a3] pb-[2px] text-[15px] leading-5 text-white">
      <span className="ml-[7px]">页面 1/1</span>
      <button className="ml-[21px]">中文(中国)</button>
      <button aria-label="宏" className="ml-[22px]">
        <svg width="16" height="16" viewBox="0 0 16 16" fill="none" stroke="#e8ecf6">
          <path d="M1.500 7v8.500h14V1.500H7" />
          <path d="M8 1h7.500v4H8z" fill="#e8ecf6" />
          <circle cx="4" cy="4" r="3.500" fill="#e8ecf6" stroke="none" />
          <path d="M4 8.500h10M4 10.500h10M4 12.500h10" strokeDasharray="2 1" />
        </svg>
      </button>
      <div className="ml-auto flex items-center pr-[11px]">
        <button aria-label="演示模式">
          <svg width="13" height="13" viewBox="0 0 13 13" fill="none" stroke="#e8ecf6">
            <path d="M0 1h13" strokeWidth="2" />
            <path d="M1.500 1v6.500h10V1M3.500 4.500h6M6.500 8v4M4 12.500h5" />
          </svg>
        </button>
        <button aria-label="缩小" className="ml-5 h-[2px] w-[9px] bg-white" />
        <input
          type="range"
          aria-label="缩放级别"
          defaultValue={51}
          className="ml-1 h-[14px] w-[125px] appearance-none bg-[linear-gradient(#e8ecf6,#e8ecf6)] bg-[length:100%_1px] bg-center bg-no-repeat [&::-webkit-slider-thumb]:h-[14px] [&::-webkit-slider-thumb]:w-[5px] [&::-webkit-slider-thumb]:appearance-none [&::-webkit-slider-thumb]:bg-white"
        />
        <button aria-label="放大" className="ml-1">
          <svg width="11" height="11" viewBox="0 0 11 11" stroke="#fff" strokeWidth="2"><path d="M5.500 0v11M0 5.500h11" /></svg>
        </button>
        <button className="ml-4 w-10 text-left">102%</button>
        <button aria-label="适应窗口" className="ml-4">
          <FitIcon color="#e8ecf6" frame="#e8ecf6" size={15} />
        </button>
        <button aria-label="切换窗口" className="ml-4">
          <svg width="16" height="16" viewBox="0 0 16 16" fill="none" stroke="#e8ecf6">
            <path d="M0.500 0v6.500h6V0M9.500 0v6.500h6V0M1.500 9v6.500h11V9" />
            <path d="M0 1h7M9 1h7M1 9.500h5M8 9.500h5" strokeWidth="2" />
          </svg>
        </button>
      </div>
      <span className="pointer-events-none absolute right-[9px] top-2 font-['Liberation_Sans',sans-serif] text-[16px] leading-[18px] text-white/60">https://blog.csdn.net/qq_43055855</span>
    </footer>
  );
}

function Taskbar() {
  return (
    <div className="flex h-[9px] shrink-0 bg-[#1f1f1f]">
      <span className="ml-[186px] w-[61px] bg-[#4d4d4d]" />
      <span className="ml-auto mr-[88px] flex items-end gap-[5px]">
        <i className="h-px w-[6px] bg-white" />
        <i className="h-px w-[6px] bg-white" />
        <i className="ml-2 h-px w-[5px] bg-white" />
        <i className="h-px w-[5px] bg-white" />
      </span>
      <span className="mr-[5px] w-px bg-[#666]" />
    </div>
  );
}

export default function App() {
  return (
    <div className={`${FONT} flex h-screen flex-col overflow-hidden bg-white`}>
      <TitleBar />
      <TabRow />
      <Ribbon />
      <main className="relative flex min-h-0 flex-1">
        <ShapesPanel />
        <div className="flex min-w-0 flex-1 flex-col">
          <div className="flex min-h-0 flex-1 pt-[21px]">
            <div className="flex min-w-0 flex-1 flex-col">
              <div className="flex h-[21px] shrink-0">
                <div className="flex w-[21px] justify-center border-b border-[#dcdcdc]">
                  <svg width="18" height="18" viewBox="0 0 18 18" stroke="#d3d8fb" className="mt-px"><path d="M9.500 0v18M0 9.500h18" /></svg>
                </div>
                <HorizontalRuler />
              </div>
              <div className="flex min-h-0 flex-1">
                <VerticalRuler />
                <Diagram />
              </div>
            </div>
            <div className="mb-[2px] ml-px mr-[7px] mt-[2px] flex w-[19px] flex-col bg-[#f2f2f2]">
              <ScrollButton label="向上滚动" dir="" />
              <div className="min-h-0 flex-[199]" />
              <div className="min-h-0 flex-[223] border border-[#ababab] bg-white" />
              <div className="min-h-0 flex-[277]" />
              <ScrollButton label="向下滚动" dir="rotate-180" />
            </div>
          </div>
          <div className="ml-[2px] mr-[29px] mt-px flex h-[19px] shrink-0 bg-[#f2f2f2]">
            <ScrollButton label="向左滚动" dir="-rotate-90" />
            <div className="flex-[464]" />
            <div className="flex-[608] border border-[#ababab] bg-white" />
            <div className="flex-[486]" />
            <ScrollButton label="向右滚动" dir="rotate-90" />
          </div>
          <PageTabs />
        </div>
        <RedArrows />
      </main>
      <StatusBar />
      <Taskbar />
    </div>
  );
}
